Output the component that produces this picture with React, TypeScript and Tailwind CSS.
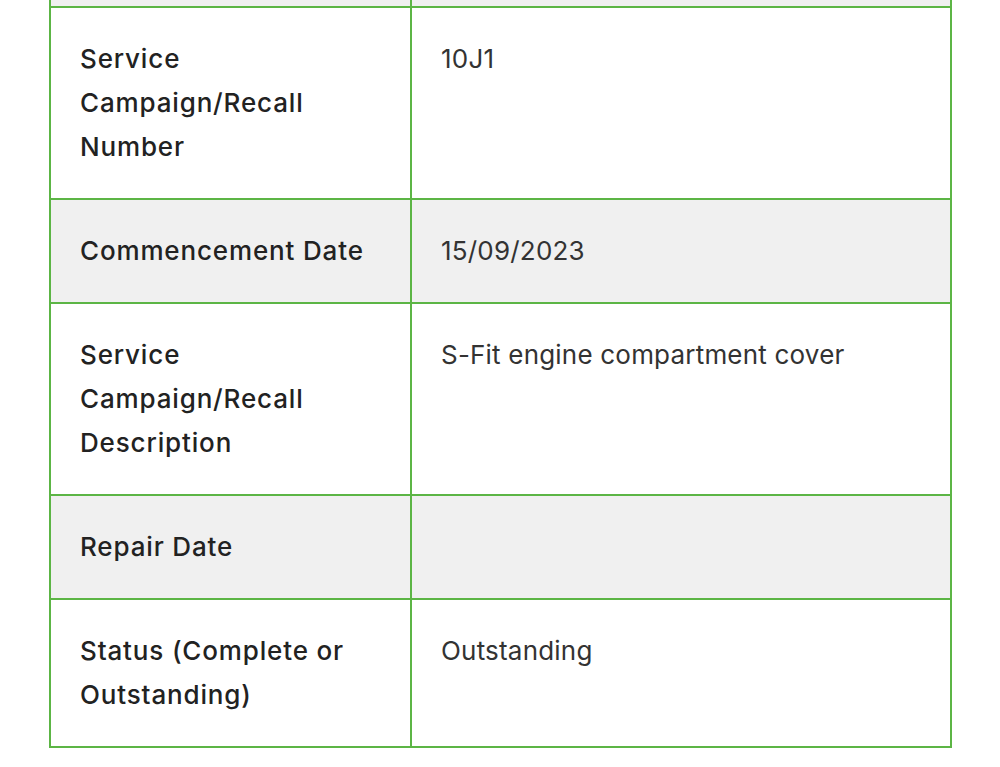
import React from "react";

const rows: { label: string; value: string; gray: boolean }[] = [
  { label: "Service Campaign/Recall Number", value: "10J1", gray: false },
  { label: "Commencement Date", value: "15/09/2023", gray: true },
  { label: "Service Campaign/Recall Description", value: "S-Fit engine compartment cover", gray: false },
  { label: "Repair Date", value: "", gray: true },
  { label: "Status (Complete or Outstanding)", value: "Outstanding", gray: false },
];

export default function App() {
  return (
    <div className="w-[1000px] h-[767px] bg-white overflow-hidden" style={{ fontFamily: "Inter, 'Noto Sans', sans-serif" }}>
      <div className="pl-[49px] w-[952px]">
        <table className="w-[903px] border-collapse table-fixed">
          <colgroup>
            <col className="w-[361px]" />
            <col />
          </colgroup>
          <tbody>
            <tr className="bg-[#f0f0f0] h-[7px]">
              <td className="border-2 border-t-0 border-[#5cb545] p-0"></td>
              <td className="border-2 border-t-0 border-[#5cb545] p-0"></td>
            </tr>
            {rows.map((r, i) => (
              <tr key={i} className={r.gray ? "bg-[#f0f0f0]" : "bg-white"}>
                <td className="border-2 border-[#5cb545] align-top pl-[29px] pr-[27px] pt-[29px] pb-[29px] text-[26px] leading-[44px] tracking-[0.85px] font-medium text-[#222222]">
                  {r.label}
                </td>
                <td className="border-2 border-[#5cb545] align-top pl-[29px] pr-[30px] pt-[29px] pb-[29px] text-[26px] leading-[44px] tracking-[0.2px] text-[#333333]">
                  {r.value}
                </td>
              </tr>
            ))}
          </tbody>
        </table>
      </div>
    </div>
  );
}
